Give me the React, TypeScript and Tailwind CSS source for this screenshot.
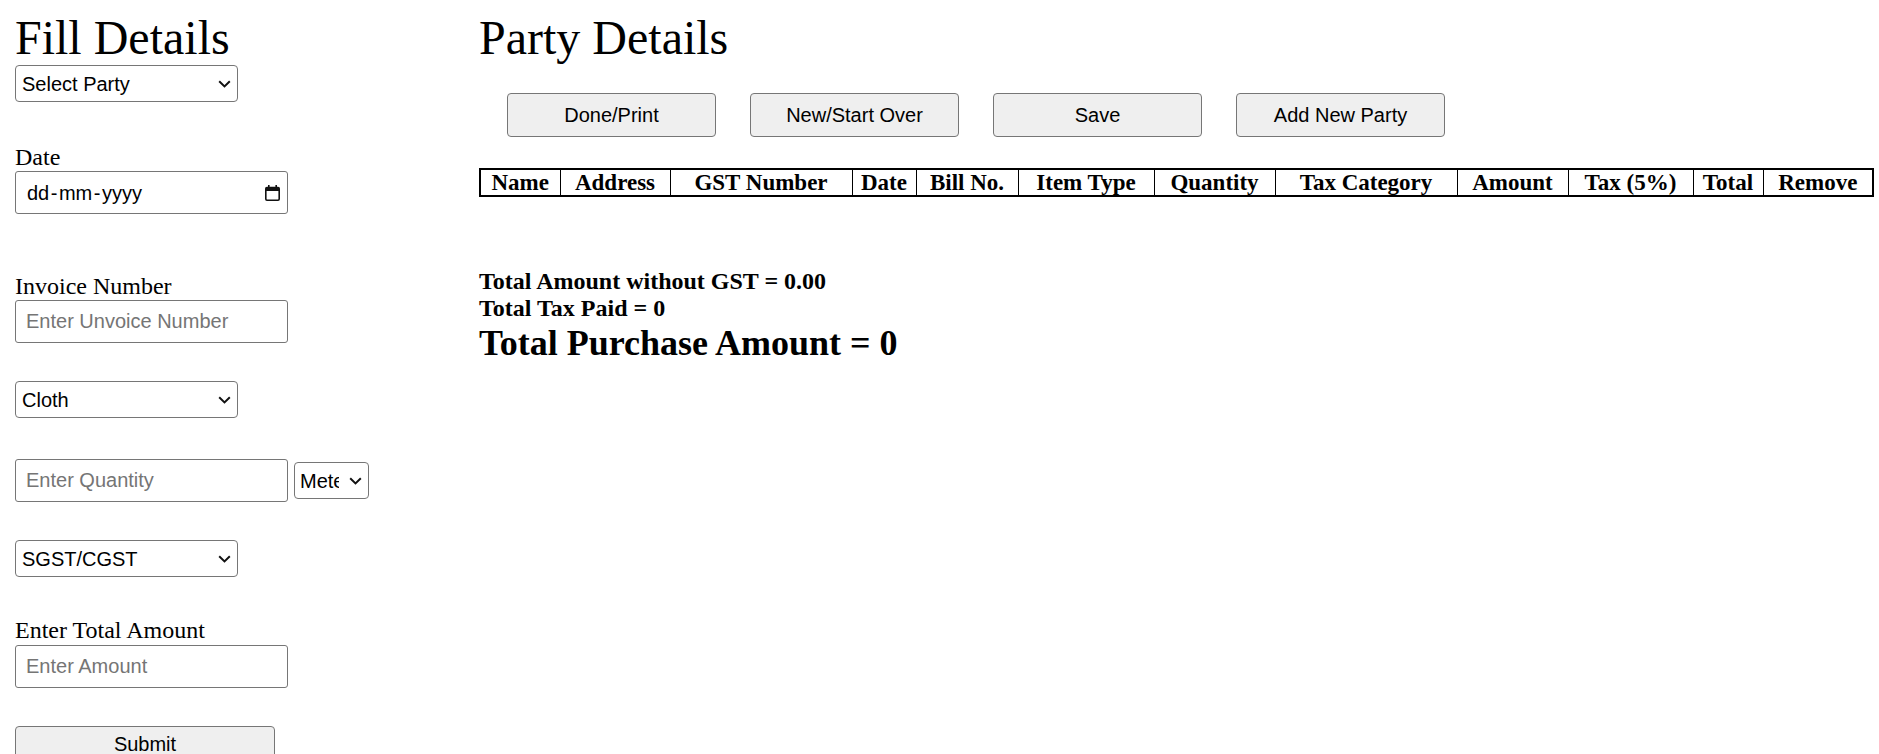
import React from 'react';

const headers = [
  { label: 'Name', w: 'w-[80px]' },
  { label: 'Address', w: 'w-[110px]' },
  { label: 'GST Number', w: 'w-[182px]' },
  { label: 'Date', w: 'w-[64px]' },
  { label: 'Bill No.', w: 'w-[102px]' },
  { label: 'Item Type', w: 'w-[136px]' },
  { label: 'Quantity', w: 'w-[121px]' },
  { label: 'Tax Category', w: 'w-[182px]' },
  { label: 'Amount', w: 'w-[111px]' },
  { label: 'Tax (5%)', w: 'w-[125px]' },
  { label: 'Total', w: 'w-[70px]' },
  { label: 'Remove', w: 'w-[110px]' },
];

const serif = "font-['Liberation_Serif',serif]";
const sans = "font-['Liberation_Sans',Arial,sans-serif]";

function Chevron({ className }: { className?: string }) {
  return (
    <svg className={className} width="13" height="8" viewBox="0 0 13 8" fill="none">
      <path d="M1.2 1.3 L6.5 6.4 L11.8 1.3" stroke="#111" strokeWidth="2" />
    </svg>
  );
}

function Select({ value, width, options }: { value: string; width: string; options: string[] }) {
  return (
    <div className={`relative h-[37px] ${width}`}>
      <select
        defaultValue={value}
        className={`h-full w-full appearance-none rounded-[4px] border border-[#767676] bg-white pl-[6px] pr-[30px] text-[20px] text-black ${sans}`}
      >
        {options.map((o) => (
          <option key={o}>{o}</option>
        ))}
      </select>
      <Chevron className="pointer-events-none absolute right-[7px] top-[15px]" />
    </div>
  );
}

function TextInput({ placeholder }: { placeholder: string }) {
  return (
    <input
      type="text"
      placeholder={placeholder}
      className={`block h-[43px] w-[273px] rounded-[3px] border border-[#767676] px-[10px] text-[20px] text-black placeholder:text-[#757575] ${sans}`}
    />
  );
}

function CalendarIcon() {
  return (
    <svg width="15" height="16" viewBox="0 0 15 16" fill="none">
      <rect x="3" y="0" width="1.6" height="2.6" fill="#111" />
      <rect x="10.4" y="0" width="1.6" height="2.6" fill="#111" />
      <rect x="0.8" y="2.6" width="13.4" height="12.6" rx="1.2" stroke="#111" strokeWidth="1.6" />
      <rect x="0.8" y="2.6" width="13.4" height="3.4" fill="#111" />
    </svg>
  );
}

function Label({ children, mt }: { children: React.ReactNode; mt: string }) {
  return <div className={`${mt} text-[24px] leading-[27px] ${serif}`}>{children}</div>;
}

export default function App() {
  return (
    <div className="flex h-[754px] overflow-hidden bg-white text-black">
      {/* form column */}
      <div className="w-[479px] shrink-0 pl-[15px]">
        <h1 className={`mt-[11px] text-[48px] leading-[54px] ${serif}`}>Fill Details</h1>
        <Select value="Select Party" width="w-[223px]" options={['Select Party']} />

        <Label mt="mt-[42px]">Date</Label>
        <div className="flex h-[43px] w-[273px] items-center justify-between rounded-[3px] border border-[#767676] pl-[11px] pr-[7px]">
          <span className={`text-[20px] text-black ${sans}`}>
            dd<span className="mx-[1.5px]">-</span>mm<span className="mx-[1.5px]">-</span>yyyy
          </span>
          <CalendarIcon />
        </div>

        <Label mt="mt-[59px]">Invoice Number</Label>
        <TextInput placeholder="Enter Unvoice Number" />

        <div className="mt-[38px]">
          <Select value="Cloth" width="w-[223px]" options={['Cloth']} />
        </div>

        <div className="mt-[41px] flex items-center gap-[6px]">
          <TextInput placeholder="Enter Quantity" />
          <div className="relative h-[37px] w-[75px]">
            <select
              defaultValue="Meter"
              className={`h-full w-full appearance-none rounded-[4px] border border-[#767676] bg-white pl-[5px] pr-[29px] text-[20px] text-black ${sans}`}
            >
              <option>Meter</option>
            </select>
            <Chevron className="pointer-events-none absolute right-[7px] top-[15px]" />
          </div>
        </div>

        <div className="mt-[38px]">
          <Select value="SGST/CGST" width="w-[223px]" options={['SGST/CGST']} />
        </div>

        <Label mt="mt-[40px]">Enter Total Amount</Label>
        <div className="mt-[1px]">
          <TextInput placeholder="Enter Amount" />
        </div>

        <button
          className={`mt-[38px] block h-[36px] w-[260px] rounded-[4px] border border-[#767676] bg-[#efefef] text-[20px] text-black ${sans}`}
        >
          Submit
        </button>
      </div>

      {/* details column */}
      <div className="flex-1">
        <h1 className={`mt-[11px] text-[48px] leading-[54px] ${serif}`}>Party Details</h1>

        <div className="ml-[28px] mt-[28px] flex gap-[34px]">
          {['Done/Print', 'New/Start Over', 'Save', 'Add New Party'].map((b) => (
            <button
              key={b}
              className={`h-[44px] w-[209px] rounded-[4px] border border-[#767676] bg-[#efefef] text-[20px] text-black ${sans}`}
            >
              {b}
            </button>
          ))}
        </div>

        <table className="mt-[31px] w-[1393px] table-fixed border-collapse border-2 border-black">
          <thead>
            <tr>
              {headers.map((h) => (
                <th
                  key={h.label}
                  className={`${h.w} border border-black p-0 text-center text-[23px] font-bold leading-[25px] ${serif}`}
                >
                  {h.label}
                </th>
              ))}
            </tr>
          </thead>
          <tbody></tbody>
        </table>

        <div className={`mt-[71px] font-bold ${serif}`}>
          <div className="text-[24px] leading-[27px]">Total Amount without GST = 0.00</div>
          <div className="text-[24px] leading-[27px]">Total Tax Paid = 0</div>
          <div className="text-[36px] leading-[42px]">Total Purchase Amount = 0</div>
        </div>
      </div>
    </div>
  );
}
